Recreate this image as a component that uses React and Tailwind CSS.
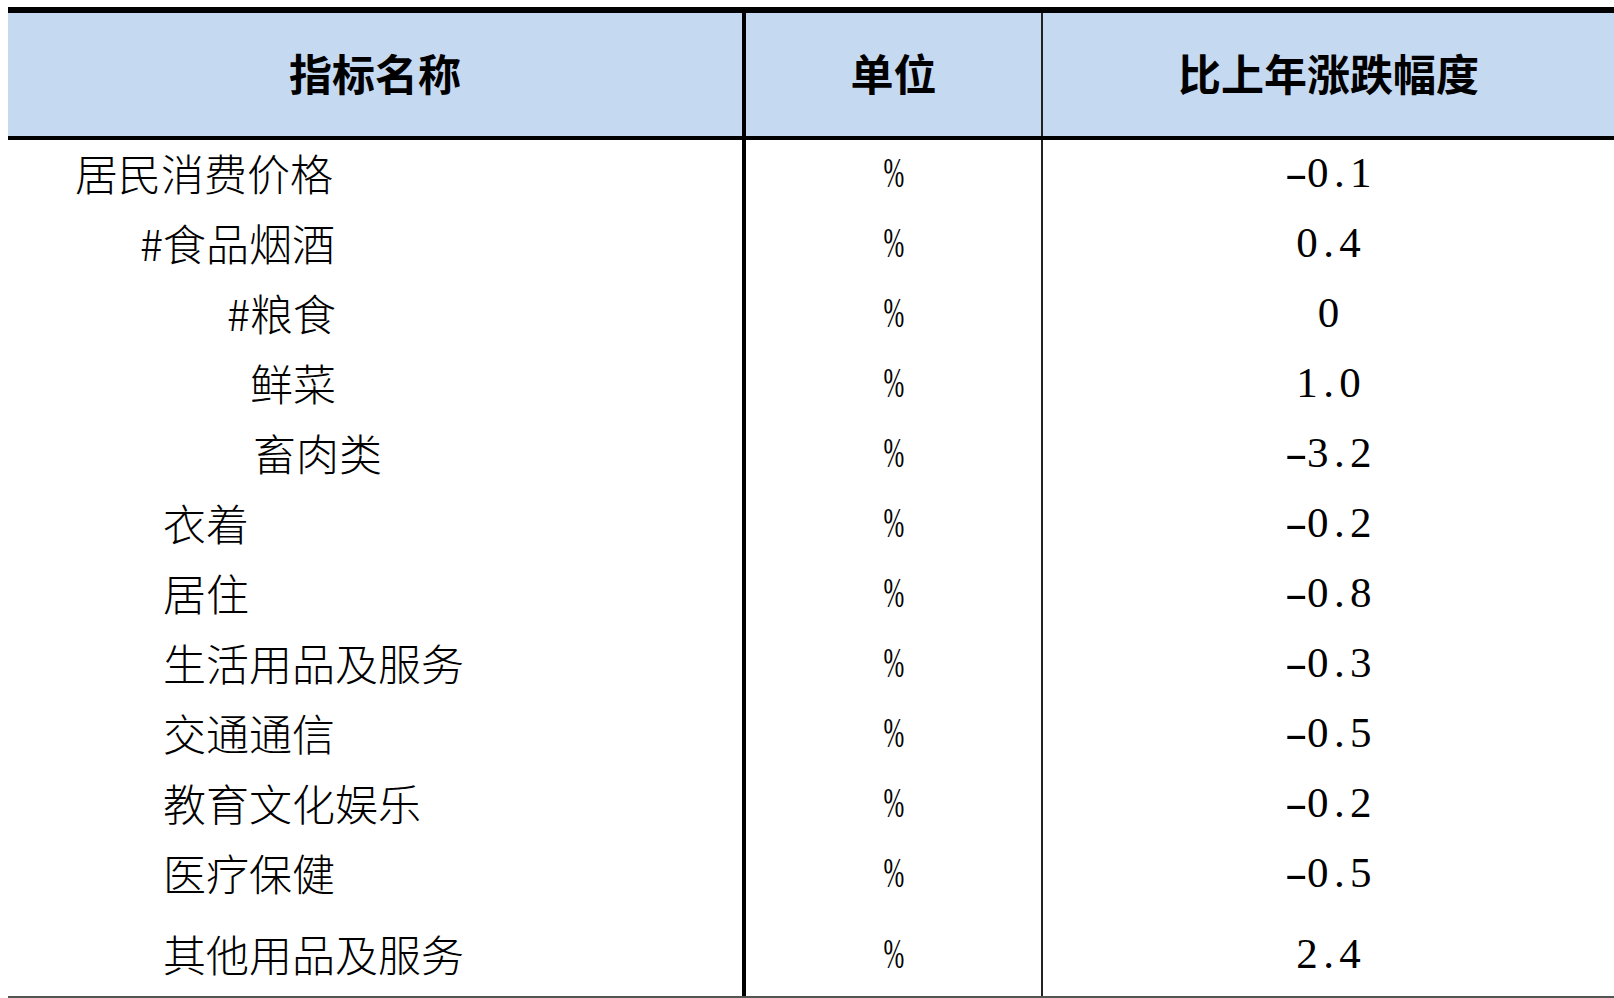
import React from 'react'

const rows = [
  { name: '居民消费价格', pad: 'pl-[67px]', value: '-0.1' },
  { name: '#食品烟酒', pad: 'pl-[132px]', value: '0.4' },
  { name: '#粮食', pad: 'pl-[219px]', value: '0' },
  { name: '鲜菜', pad: 'pl-[242px]', value: '1.0' },
  { name: '畜肉类', pad: 'pl-[245px]', value: '-3.2' },
  { name: '衣着', pad: 'pl-[155px]', value: '-0.2' },
  { name: '居住', pad: 'pl-[155px]', value: '-0.8' },
  { name: '生活用品及服务', pad: 'pl-[155px]', value: '-0.3' },
  { name: '交通通信', pad: 'pl-[155px]', value: '-0.5' },
  { name: '教育文化娱乐', pad: 'pl-[155px]', value: '-0.2' },
  { name: '医疗保健', pad: 'pl-[155px]', value: '-0.5' },
  { name: '其他用品及服务', pad: 'pl-[155px]', value: '2.4', last: true },
]

const cjk = "[font-family:'Noto_Sans_CJK_SC',sans-serif]"
const serif = "[font-family:'Liberation_Serif',serif]"

// fixed half-width cells, like the fangsong digits in the sheet
function Num({ text }) {
  return (
    <span className={`${serif} flex text-[43px] leading-none font-normal`}>
      {text.split('').map((c, i) => (
        <span key={i} className="inline-block w-[21.5px] text-center">
          {c === '-' ? <span className="inline-block scale-x-[1.6]">-</span> : c}
        </span>
      ))}
    </span>
  )
}

function Percent() {
  return (
    <span className={`${serif} inline-block text-[43px] leading-none scale-x-[0.58]`}>%</span>
  )
}

export default function App() {
  return (
    <div className="w-[1614px] h-[998px] overflow-hidden bg-white text-black pl-[8px]">
      <div className="mt-[7px] border-t-[6px] border-b-4 border-black bg-[#c5d9f1] flex h-[133px]">
        <div className={`${cjk} w-[738px] border-r-4 border-black flex items-center justify-center pb-[4px] text-[43px] font-bold`}>
          指标名称
        </div>
        <div className={`${cjk} w-[297px] border-r-2 border-[#222] flex items-center justify-center pb-[4px] text-[43px] font-bold`}>
          单位
        </div>
        <div className={`${cjk} flex-1 flex items-center justify-center pb-[4px] text-[43px] font-bold`}>
          比上年涨跌幅度
        </div>
      </div>

      <div className="border-b-2 border-[#555]">
        {rows.map((r) => {
          const lift = r.last ? '' : 'pb-[6px]'
          return (
            <div key={r.name} className={`flex ${r.last ? 'h-[86px]' : 'h-[70px]'}`}>
              <div className={`${cjk} ${r.pad} ${lift} w-[738px] border-r-4 border-black flex items-center text-[43px] font-light leading-none`}>
                {r.name}
              </div>
              <div className={`${lift} w-[297px] border-r-2 border-[#222] flex items-center justify-center`}>
                <Percent />
              </div>
              <div className={`${lift} flex-1 flex items-center justify-center`}>
                <Num text={r.value} />
              </div>
            </div>
          )
        })}
      </div>
    </div>
  )
}
